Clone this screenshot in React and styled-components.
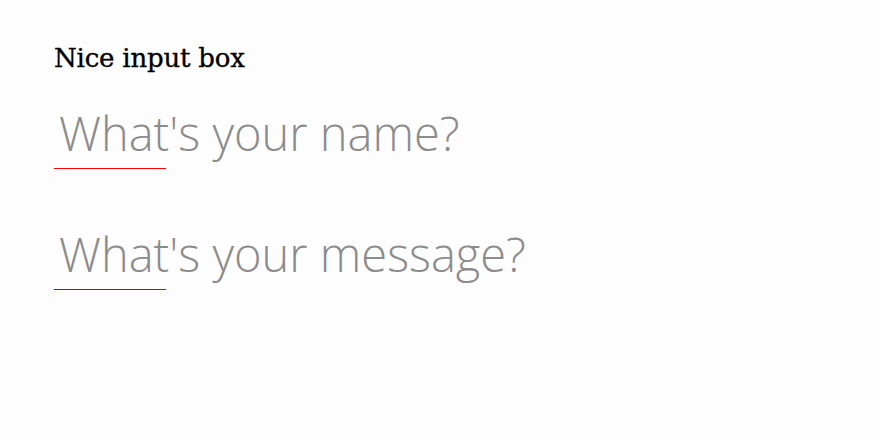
import styled, { createGlobalStyle } from "styled-components";

const GlobalStyle = createGlobalStyle`
  html, body {
    margin: 0;
    background: #fdfdfd;
  }
`;

const Page = styled.div`
  padding: 43px 54px;
  display: flex;
  flex-direction: column;
`;

const Title = styled.h1`
  margin: 0 0 28px;
  font-family: "DejaVu Serif", "Liberation Serif", serif;
  font-size: 26px;
  line-height: 30px;
  font-weight: 400;
  color: #000;
  letter-spacing: -0.2px;
  -webkit-text-stroke: 0.35px #000;
`;

const Fields = styled.div`
  display: flex;
  flex-direction: column;
  gap: 53px;
`;

const Field = styled.label`
  display: flex;
  flex-direction: column;
  width: 600px;
`;

const Input = styled.input`
  border: none;
  outline: none;
  background: transparent;
  padding: 0 0 0 5px;
  height: 64px;
  font-family: "Open Sans", sans-serif;
  font-weight: 300;
  font-size: 47px;
  color: #333;

  &::placeholder {
    color: #8c8c8c;
    opacity: 1;
  }
`;

const Underline = styled.span`
  display: block;
  width: 112px;
  margin-top: 3px;
  border-top: 1px solid ${(p) => p.$color};
`;

const fields = [
  { id: "name", placeholder: "What's your name?", color: "#ff0000" },
  { id: "message", placeholder: "What's your message?", color: "#d40000" },
];

const App = () => {
  return (
    <>
      <GlobalStyle />
      <Page>
        <Title>Nice input box</Title>
        <Fields>
          {fields.map(({ id, placeholder, color }) => (
            <Field key={id}>
              <Input type="text" placeholder={placeholder} />
              <Underline $color={color} />
            </Field>
          ))}
        </Fields>
      </Page>
    </>
  );
};

export default App;
